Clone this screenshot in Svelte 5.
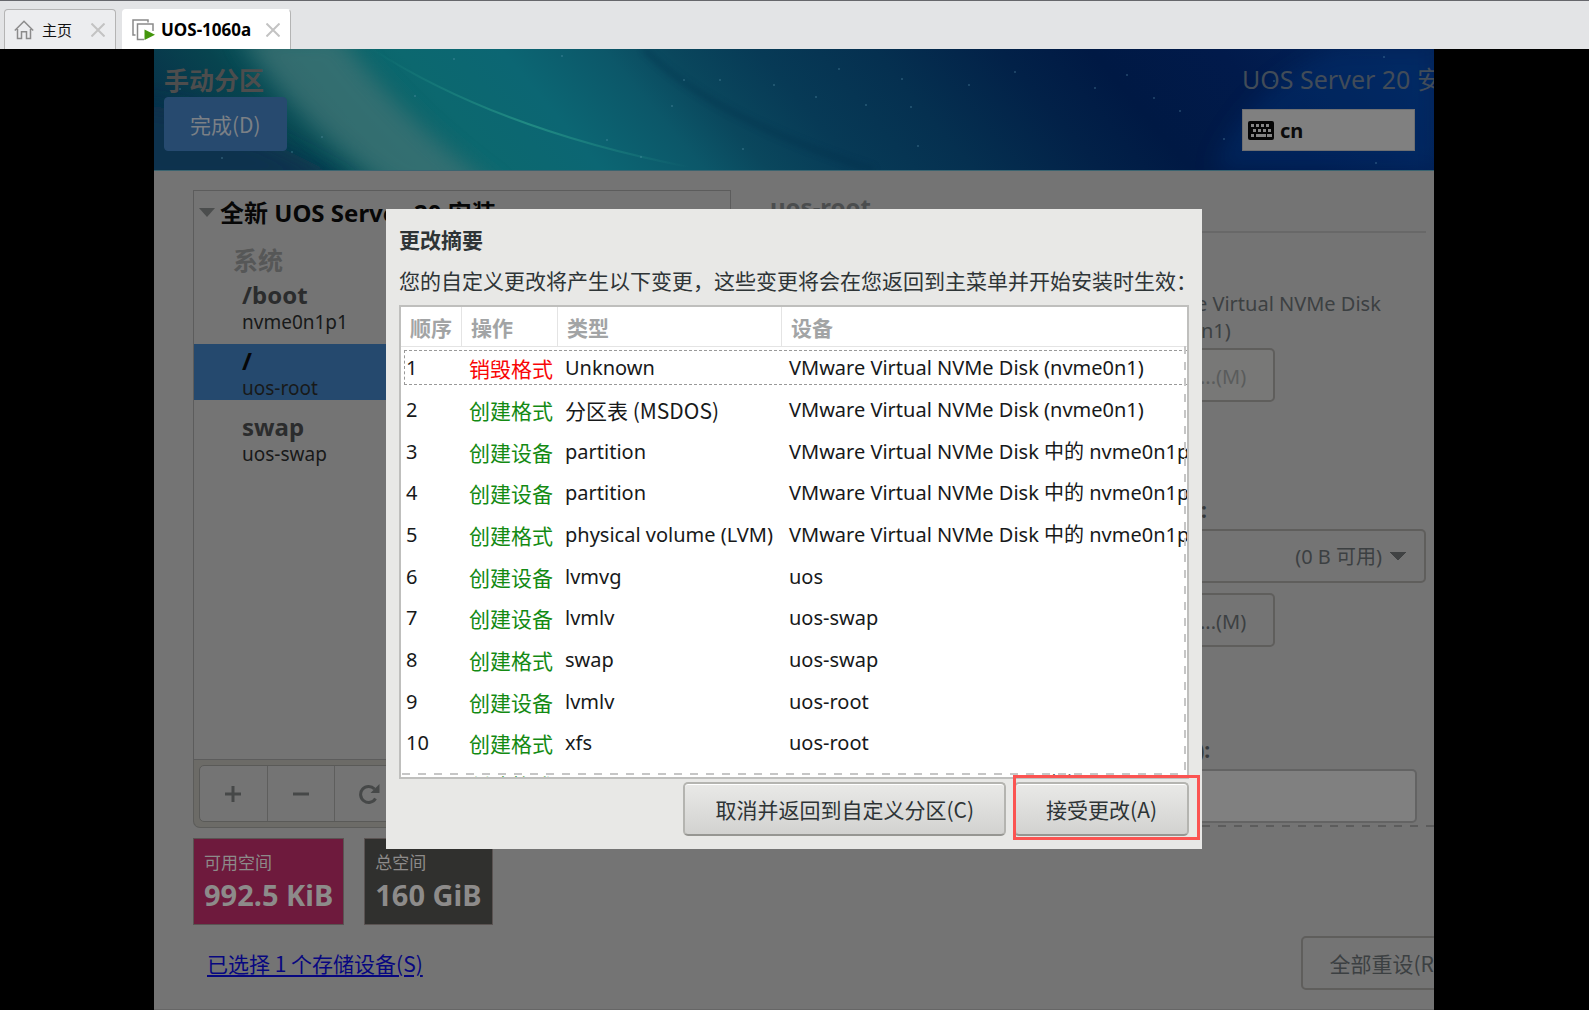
<script>
  const mounts = [
    { point: '/boot', device: 'nvme0n1p1' },
    { point: '/', device: 'uos-root' },
    { point: 'swap', device: 'uos-swap' }
  ]
  let selected = '/'

  const actions = [
    { action: '销毁格式', type: 'Unknown', device: 'VMware Virtual NVMe Disk (nvme0n1)', destroy: true },
    { action: '创建格式', type: '分区表 (MSDOS)', device: 'VMware Virtual NVMe Disk (nvme0n1)', cjk: true },
    { action: '创建设备', type: 'partition', device: 'VMware Virtual NVMe Disk 中的 nvme0n1p1' },
    { action: '创建设备', type: 'partition', device: 'VMware Virtual NVMe Disk 中的 nvme0n1p2' },
    { action: '创建格式', type: 'physical volume (LVM)', device: 'VMware Virtual NVMe Disk 中的 nvme0n1p2' },
    { action: '创建设备', type: 'lvmvg', device: 'uos' },
    { action: '创建设备', type: 'lvmlv', device: 'uos-swap' },
    { action: '创建格式', type: 'swap', device: 'uos-swap' },
    { action: '创建设备', type: 'lvmlv', device: 'uos-root' },
    { action: '创建格式', type: 'xfs', device: 'uos-root' },
    { action: '创建格式', type: 'xfs', device: 'VMware Virtual NVMe Disk 中的 nvme0n1p1' }
  ]

  const stars = [
    [26, 40], [68, 109], [138, 103], [168, 88], [300, 10], [261, 47], [408, 7], [453, 91],
    [487, 108], [518, 57], [530, 31], [566, 31], [589, 100], [620, 36], [662, 48], [685, 20], [712, 56],
    [748, 30], [757, 58], [764, 97], [815, 36], [861, 23], [941, 39], [973, 26], [1000, 49], [1026, 62],
    [1070, 90], [1120, 32], [1230, 8], [1222, 114]
  ]
</script>

<div class="page">
  <nav class="tabs">
    <div class="tab">
      <svg width="20" height="20" viewBox="0 0 20 20" fill="none" stroke="#8b8b8b" stroke-width="1.5">
        <path d="M0.8 10.5 10 1.2l9.2 9.3M3.5 9v9.5h4v-6.8h5v6.8h4V9" />
      </svg>
      <span>主页</span>
      <button class="close" aria-label="关闭主页">
        <svg width="14" height="14" viewBox="0 0 14 14" stroke="#c3c3c3" stroke-width="2"><path d="M.5.5l13 13M13.5.5l-13 13" /></svg>
      </button>
    </div>
    <div class="tab active">
      <svg width="23" height="22" viewBox="0 0 23 22" fill="none" stroke="#8a8a8a" stroke-width="1.5">
        <path d="M3.5 16H1V1h15v2.5M12 20.5H5.500V5H21v7" />
        <path d="M12.500 10.500v10.500L23 15.800z" fill="#43960c" stroke="none" />
      </svg>
      <span>UOS-1060a</span>
      <button class="close" aria-label="关闭 UOS-1060a">
        <svg width="14" height="14" viewBox="0 0 14 14" stroke="#c3c3c3" stroke-width="2"><path d="M.5.5l13 13M13.5.5l-13 13" /></svg>
      </button>
    </div>
  </nav>

  <div class="console">
    <div class="screen">
      <header>
        <svg class="sky" viewBox="0 0 1280 121" preserveAspectRatio="none" aria-hidden="true">
          <defs>
            <linearGradient id="base" gradientUnits="userSpaceOnUse" x1="0" y1="0" x2="1280" y2="0" gradientTransform="translate(-50 0) skewX(40)">
              <stop offset="0" stop-color="#083149" />
              <stop offset=".08" stop-color="#07444f" />
              <stop offset=".15" stop-color="#0a6064" />
              <stop offset=".23" stop-color="#0c686f" />
              <stop offset=".31" stop-color="#0c6673" />
              <stop offset=".39" stop-color="#0c5769" />
              <stop offset=".44" stop-color="#0a475d" />
              <stop offset=".51" stop-color="#073a56" />
              <stop offset=".6" stop-color="#053050" />
              <stop offset=".7" stop-color="#022148" />
              <stop offset=".77" stop-color="#001944" />
              <stop offset=".87" stop-color="#011a4b" />
              <stop offset="1" stop-color="#032358" />
            </linearGradient>
            <linearGradient id="arc" x1="0" y1="0" x2="1" y2="0">
              <stop offset="0" stop-color="#2a9a8b" stop-opacity="0" />
              <stop offset=".5" stop-color="#2a9a8b" stop-opacity=".7" />
              <stop offset="1" stop-color="#2a9a8b" stop-opacity="0" />
            </linearGradient>
            <filter id="soft" x="-20%" y="-50%" width="140%" height="200%"><feGaussianBlur stdDeviation="11" /></filter>
            <filter id="edge" x="-20%" y="-50%" width="140%" height="200%"><feGaussianBlur stdDeviation="3" /></filter>
          </defs>
          <rect width="1280" height="121" fill="url(#base)" />
          <path d="M-20 55Q70 60 205 140H-20z" fill="#08324e" filter="url(#soft)" />
          <path d="M85-15H185Q240 65 350 145H245Q150 85 85-15z" fill="#4a7677" opacity=".65" filter="url(#soft)" />
          <path d="M215-2Q340 80 535 118" fill="none" stroke="url(#arc)" stroke-width="2" />
          <path d="M490 0Q560 70 720 121" fill="none" stroke="#062c46" stroke-width="6" opacity=".35" filter="url(#edge)" />
          <path d="M1060 121Q1090 40 1180 0H1280V121z" fill="#053373" opacity=".4" filter="url(#soft)" />
          {#each stars as [x, y]}
            <circle cx={x} cy={y} r="1" fill="#6aa3b8" opacity=".35" />
          {/each}
        </svg>
        <div class="head-left">
          <h1>手动分区</h1>
          <button class="done">完成(D)</button>
        </div>
        <div class="head-right">
          <div class="product">UOS Server 20 安装</div>
          <button class="keyboard">
            <svg width="26" height="19" viewBox="0 0 26 19">
              <rect width="26" height="19" rx="2" fill="#060606" />
              <g fill="#858585">
                <path d="M3 3h3v3H3zM8 3h3v3H8zM13 3h3v3h-3zM18 3h3v3h-3z" />
                <path d="M5 8h3v3H5zM10 8h3v3h-3zM15 8h3v3h-3zM20 8h3v3h-3z" />
                <path d="M3 13h3v3H3zM8 13h10v3H8zM19 13h5v3h-5z" />
              </g>
            </svg>
            cn
          </button>
        </div>
      </header>

      <main>
        <div class="panels">
          <section class="mounts">
            <div class="list">
              <h2>
                <svg width="16" height="9" viewBox="0 0 16 9"><path d="M0 0h16L8 9z" fill="#4b4d4d" /></svg>
                全新 UOS Server 20 安装
              </h2>
              <h3>系统</h3>
              {#each mounts as m}
                <button class="mount" class:selected={m.point === selected} on:click={() => (selected = m.point)}>
                  <b>{m.point}</b>
                  <span>{m.device}</span>
                </button>
              {/each}
            </div>
            <div class="toolbar">
              <div class="group">
                <button aria-label="添加"><svg width="16" height="16" viewBox="0 0 16 16"><path d="M0 8h16M8 0v16" stroke="#464848" stroke-width="3" /></svg></button>
                <button aria-label="删除"><svg width="16" height="16" viewBox="0 0 16 16"><path d="M0 8h16" stroke="#464848" stroke-width="3" /></svg></button>
                <button aria-label="重新载入">
                  <svg width="22" height="20" viewBox="0 0 22 20" fill="none"><path d="M17.500 14.500A8 8 0 1 1 16.500 5" stroke="#464848" stroke-width="3" /><path d="M21.500 0v9H12.500z" fill="#464848" /></svg>
                </button>
              </div>
            </div>
          </section>

          <section class="details">
            <h2>uos-root</h2>
            <div class="fields">
              <p>VMware Virtual NVMe Disk (nvme0n1)</p>
              <button class="flat" disabled>修改...(M)</button>
              <label class="vg" for="vg">卷组(V):</label>
              <select id="vg">
                <option>(0 B 可用)</option>
              </select>
              <button class="flat">修改...(M)</button>
              <label class="name" for="name">名称(N):</label>
              <input id="name" type="text" />
            </div>
          </section>
        </div>

        <div class="spaces">
          <div class="space free"><span>可用空间</span><b>992.5 KiB</b></div>
          <div class="space total"><span>总空间</span><b>160 GiB</b></div>
        </div>

        <footer>
          <a href="#storage">已选择 1 个存储设备(S)</a>
          <button class="flat reset">全部重设(R)</button>
        </footer>
      </main>

      <div class="overlay">
        <div class="dialog" role="dialog" aria-labelledby="summary">
          <h2 id="summary">更改摘要</h2>
          <p>您的自定义更改将产生以下变更，这些变更将会在您返回到主菜单并开始安装时生效：</p>
          <div class="scroller">
            <table>
              <thead>
                <tr><th class="order">顺序</th><th class="action">操作</th><th class="type">类型</th><th>设备</th></tr>
              </thead>
              <tbody>
                {#each actions as a, i}
                  <tr>
                    <td>{i + 1}</td>
                    <td class={a.destroy ? 'destroy' : 'create'}>{a.action}</td>
                    <td class:cjk={a.cjk}>{a.type}</td>
                    <td>{a.device}</td>
                  </tr>
                {/each}
              </tbody>
            </table>
          </div>
          <div class="buttons">
            <button>取消并返回到自定义分区(C)</button>
            <div class="marked"><button>接受更改(A)</button></div>
          </div>
        </div>
      </div>
    </div>
  </div>
</div>

<style>
  :global(body) {
    background: #000;
  }
  .page {
    --cjk: 'Noto Sans CJK SC', sans-serif;
    display: flex;
    flex-direction: column;
    min-height: 100vh;
    font-family: 'Noto Sans', 'Noto Sans CJK SC', sans-serif;
    font-size: 20px;
  }
  .page * {
    box-sizing: border-box;
  }
  h1,
  h2,
  h3,
  p {
    margin: 0;
  }
  button,
  input,
  select {
    margin: 0;
    font: inherit;
    color: inherit;
  }
  svg {
    flex: none;
  }

  .tabs {
    display: flex;
    align-items: flex-end;
    gap: 6px;
    height: 49px;
    padding-left: 4px;
    box-sizing: border-box;
    background: #e3e4e6;
    border-top: 1px solid #66676c;
  }
  .tab {
    display: flex;
    align-items: center;
    height: 40px;
    padding: 0 10px 0 9px;
    border: 1px solid #b4b4b4;
    border-bottom: 0;
    border-radius: 4px 4px 0 0;
    background: #ecedef;
    font-size: 15px;
    color: #111;
  }
  .tab span {
    margin: 0 19px 0 8px;
  }
  .tab.active {
    background: #fff;
    border-left-color: #fff;
    border-top-color: #fff;
    font-size: 17px;
    font-weight: 700;
    color: #000;
  }
  .tab.active span {
    margin: 0 15px 0 6px;
  }
  .close {
    display: flex;
    padding: 0;
    border: 0;
    background: none;
  }

  .console {
    flex: 1;
    display: flex;
    padding: 0 155px 0 154px;
    background: #000;
  }
  .screen {
    flex: 1;
    min-width: 0;
    position: relative;
    display: flex;
    flex-direction: column;
    overflow: hidden;
    background: #747474;
    border-bottom: 1px solid #666;
  }
  header {
    position: relative;
    display: flex;
    justify-content: space-between;
    height: 122px;
    border-bottom: 1px solid #3a6470;
  }
  .sky {
    position: absolute;
    inset: 0;
    width: 100%;
    height: 100%;
  }
  .head-left,
  .head-right {
    position: relative;
    padding: 12px 10px 0;
  }
  .head-right {
    width: 192px;
    padding: 12px 0 0;
  }
  h1,
  .product {
    font-size: 25px;
    line-height: 36px;
    white-space: nowrap;
  }
  h1 {
    font-weight: 700;
    font-family: var(--cjk);
    color: #4d4d4d;
  }
  .product {
    color: #424c58;
    margin-bottom: 12px;
  }
  .done {
    height: 54px;
    padding: 0 25px;
    border: 1px solid #264a70;
    border-radius: 4px;
    background: #274a6f;
    color: #7b8086;
    font-family: var(--cjk);
    font-size: 21px;
  }
  .keyboard {
    display: flex;
    align-items: center;
    gap: 6px;
    width: 173px;
    height: 42px;
    padding: 0 5px;
    border: 1px solid #6e6f72;
    background: #808080;
    color: #0b0b0b;
    font-weight: 700;
  }

  main {
    flex: 1;
    display: flex;
    flex-direction: column;
    padding: 19px 8px 19px 39px;
  }
  .panels {
    flex: 1;
    display: flex;
    gap: 39px;
  }
  .mounts {
    flex: 0 0 538px;
    display: flex;
    flex-direction: column;
  }
  .list {
    flex: 1;
    border: 1px solid #5c5c5c;
    background: #747474;
  }
  .list h2 {
    display: flex;
    align-items: center;
    gap: 5px;
    height: 43px;
    padding-left: 5px;
    font-size: 24px;
    line-height: 43px;
    color: #070707;
  }
  .list h3 {
    padding-left: 39px;
    margin: 7px 0 9px;
    font-family: var(--cjk);
    font-size: 25px;
    font-weight: 700;
    line-height: 36px;
    height: 28px;
    color: #565757;
  }
  .mount {
    display: block;
    width: 100%;
    height: 56px;
    margin-bottom: 10px;
    padding: 3px 0 0 48px;
    border: 0;
    background: none;
    text-align: left;
    color: #2b2c2d;
  }
  .mount b,
  .mount span {
    display: block;
    line-height: 28px;
  }
  .mount b {
    font-size: 24px;
  }
  .mount span {
    font-size: 19px;
    line-height: 26px;
    color: #181919;
  }
  .mount.selected {
    background: #25496e;
    color: #060606;
  }
  .toolbar {
    padding: 5px;
    border: 1px solid #5c5c5a;
    border-top: 0;
    border-radius: 0 0 7px 7px;
    background: #6c6b67;
  }
  .group {
    display: flex;
    width: 204px;
    height: 57px;
    border: 1px solid #5a5a58;
    border-radius: 5px;
    background: #747474;
  }
  .group button {
    flex: 1;
    display: flex;
    align-items: center;
    justify-content: center;
    border: 0;
    border-right: 1px solid #5e5e5d;
    background: none;
  }
  .group button:last-child {
    border-right: 0;
  }

  .details {
    flex: 1;
    display: flex;
    flex-direction: column;
    margin-right: -8px;
    padding-right: 8px;
    background: repeating-linear-gradient(to right, #5c5c5c 0 8px, transparent 8px 16px) 0 calc(100% - 1px) / 100% 2px no-repeat;
    color: #3c4042;
  }
  .details h2 {
    height: 43px;
    border-bottom: 2px solid #686868;
    font-size: 24px;
    line-height: 34px;
    color: #4b4d4e;
  }
  .fields {
    display: flex;
    flex-direction: column;
    align-items: flex-start;
    width: 295px;
    margin: 57px 0 0 auto;
  }
  .fields p {
    margin-bottom: 4px;
    line-height: 27px;
  }
  .flat,
  select {
    height: 54px;
    padding: 0 27px;
    border: 2px solid #5f5e5c;
    border-radius: 5px;
    background: #747474;
    color: #3c4042;
  }
  .flat:disabled {
    background: #787877;
    color: #5a5c5c;
  }
  .fields label {
    font-size: 21px;
    font-weight: 700;
    line-height: 30px;
    color: #36393b;
  }
  .vg {
    margin: 93px 0 4px;
  }
  .name {
    margin: 88px 0 4px;
  }
  select {
    width: 100%;
    margin-bottom: 10px;
    padding: 0 42px 0 16px;
    appearance: none;
    text-align-last: right;
    background: conic-gradient(from -45deg at 50% 100%, #404243 90deg, transparent 0) no-repeat right 18px center / 16px 8px, #747474;
  }
  .fields input {
    width: 286px;
    height: 54px;
    border: 2px solid #636363;
    border-radius: 5px;
    background: #808080;
  }

  .spaces {
    display: flex;
    gap: 20px;
    margin: 10px 0 11px;
  }
  .space {
    display: flex;
    flex-direction: column;
    height: 87px;
    padding: 10px;
    border: 1px solid #5a5352;
    color: #8d8b8a;
  }
  .space span {
    font-size: 17px;
    line-height: 28px;
  }
  .space b {
    font-size: 29px;
    line-height: 36px;
  }
  .free {
    background: #6e1a3d;
  }
  .total {
    background: #30302e;
  }
  footer {
    display: flex;
    align-items: center;
    justify-content: space-between;
    padding-left: 14px;
    font-family: var(--cjk);
    font-size: 21px;
    white-space: nowrap;
  }
  footer a {
    color: #070780;
    text-underline-offset: 3px;
  }
  .reset {
    margin-right: -43px;
    padding: 0 26px;
  }

  .overlay {
    position: absolute;
    inset: 0;
    display: flex;
    align-items: center;
    justify-content: center;
  }
  .dialog {
    width: 816px;
    max-width: 100%;
    padding: 14px 13px 13px;
    background: #e8e8e6;
    color: #2e3436;
    font-family: var(--cjk);
    font-size: 21px;
    line-height: 32px;
  }
  .dialog h2 {
    font-size: 21px;
  }
  .dialog h2,
  .dialog p {
    margin-bottom: 9px;
    white-space: nowrap;
  }
  .scroller {
    position: relative;
    height: 474px;
    margin-bottom: 3px;
    overflow: hidden;
    border: 2px solid #bfbfbd;
    background: #fff;
  }
  .scroller::after {
    content: '';
    position: absolute;
    inset: 39px 1px 2px 1px;
    background:
      repeating-linear-gradient(to bottom, #c6c6c6 0 8px, transparent 8px 16px) right / 2px 100% no-repeat,
      repeating-linear-gradient(to right, #c6c6c6 0 8px, transparent 8px 16px) bottom / 100% 2px no-repeat;
  }
  table {
    width: 100%;
    table-layout: fixed;
    border-collapse: separate;
    border-spacing: 0;
  }
  th {
    height: 40px;
    padding: 0 0 0 9px;
    border-right: 1px solid #e4e4e4;
    border-bottom: 1px solid #e4e4e4;
    text-align: left;
    font-weight: 700;
    line-height: 36px;
    color: #a2a4a5;
  }
  th:last-child {
    border-right: 0;
  }
  .order {
    width: 61px;
  }
  .action {
    width: 96px;
  }
  .type {
    width: 224px;
  }
  tbody tr {
    position: relative;
  }
  tbody tr:first-child td:first-child::before {
    content: '';
    position: absolute;
    inset: 3px 0 4px 3px;
    border: 1px dashed #999;
    border-right: 0;
  }
  td {
    height: 42px;
    padding: 0 0 0 7px;
    font-family: 'Noto Sans', 'Noto Sans CJK SC', sans-serif;
    font-size: 20px;
    white-space: nowrap;
    color: #17191a;
  }
  td:first-child {
    padding-left: 5px;
  }
  tr:nth-child(3n) td {
    height: 41px;
  }
  .create,
  .destroy,
  .cjk {
    font-family: var(--cjk);
    font-size: 21px;
  }
  .create {
    color: #138a13;
  }
  .destroy {
    color: #f90606;
  }
  .buttons {
    display: flex;
    justify-content: flex-end;
    gap: 8px;
  }
  .buttons button {
    height: 54px;
    padding: 0 30px;
    border: 2px solid #b4b4b0;
    border-bottom-color: #969692;
    border-radius: 5px;
    background: linear-gradient(#e9e9e7, #d2d2d0);
    box-shadow: inset 0 1px #fff;
    white-space: nowrap;
  }
  .marked {
    position: relative;
  }
  .marked::after {
    content: '';
    position: absolute;
    inset: -7px -11px -4px -1px;
    border: 3px solid #fb5452;
    pointer-events: none;
  }
</style>
